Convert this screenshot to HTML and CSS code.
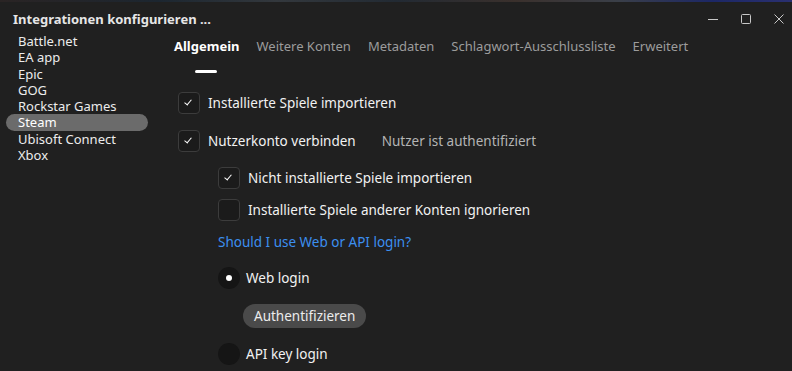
FILE: index.html
```html
<!DOCTYPE html>
<html lang="de">
  <head>
    <meta charset="UTF-8" />
    <title>Integrationen konfigurieren</title>
    <link rel="stylesheet" href="styles.css">
  </head>
  <body>
    <div class="desktop-strip"></div>
    <div class="window">
      <div class="titlebar">
        <span class="title">Integrationen konfigurieren ...</span>
        <div class="controls">
          <svg class="ctl" width="12" height="12" viewBox="0 0 12 12"><path d="M1 6.5h10" stroke="#c8c8c8" stroke-width="1"/></svg>
          <svg class="ctl" width="12" height="12" viewBox="0 0 12 12"><rect x="1.5" y="1.5" width="9" height="9" rx="1" fill="none" stroke="#c8c8c8" stroke-width="1"/></svg>
          <svg class="ctl" width="12" height="12" viewBox="0 0 12 12"><path d="M1.5 1.5l9 9M10.5 1.5l-9 9" stroke="#c8c8c8" stroke-width="1"/></svg>
        </div>
      </div>

      <div class="body">
        <ul class="sidebar">
          <li>Battle.net</li>
          <li>EA app</li>
          <li>Epic</li>
          <li>GOG</li>
          <li>Rockstar Games</li>
          <li class="active">Steam</li>
          <li>Ubisoft Connect</li>
          <li>Xbox</li>
        </ul>

        <div class="content">
          <div class="tabs">
            <span class="tab current">Allgemein</span>
            <span class="tab">Weitere Konten</span>
            <span class="tab">Metadaten</span>
            <span class="tab">Schlagwort-Ausschlussliste</span>
            <span class="tab">Erweitert</span>
          </div>

          <div class="options">
            <label class="check">
              <span class="box checked"></span>
              <span>Installierte Spiele importieren</span>
            </label>
            <label class="check">
              <span class="box checked"></span>
              <span>Nutzerkonto verbinden</span>
              <span class="status">Nutzer ist authentifiziert</span>
            </label>

            <div class="nested">
              <label class="check small">
                <span class="box checked"></span>
                <span>Nicht installierte Spiele importieren</span>
              </label>
              <label class="check small">
                <span class="box"></span>
                <span>Installierte Spiele anderer Konten ignorieren</span>
              </label>

              <a class="help">Should I use Web or API login?</a>

              <label class="radio">
                <span class="dot selected"></span>
                <span>Web login</span>
              </label>
              <button class="auth">Authentifizieren</button>
              <label class="radio">
                <span class="dot"></span>
                <span>API key login</span>
              </label>
            </div>
          </div>
        </div>
      </div>
    </div>
  </body>
</html>
```

FILE: styles.css
```css
html, body {
  margin: 0;
  height: 100%;
  overflow: hidden;
}

body {
  background: #202020;
  font-family: "Noto Sans", "Open Sans", sans-serif;
  font-size: 13.5px;
  color: #f2f2f2;
}

.desktop-strip {
  height: 2px;
  background: linear-gradient(90deg, #2a2424 0%, #1c2630 20%, #33383d 35%, #222a33 50%, #3a302c 65%, #3a3f48 78%, #1c2766 90%, #2a3070 100%);
}

.titlebar {
  display: flex;
  align-items: center;
  justify-content: space-between;
  height: 30px;
  padding: 2px 0 0 13px;
}
.title {
  font-weight: bold;
  font-size: 13px;
  color: #e6e6e6;
}
.controls {
  display: flex;
  gap: 21px;
  padding-right: 7px;
}

.body {
  display: flex;
}

.sidebar {
  list-style: none;
  margin: -1px 0 0;
  padding: 0 0 0 6px;
  width: 142px;
}
.sidebar li {
  height: 16.3px;
  line-height: 16px;
  padding-left: 12px;
  font-size: 13px;
  color: #ececec;
  border-radius: 9px;
}
.sidebar li.active {
  background: #6b6b6b;
  color: #fff;
}

.content {
  flex: 1;
  padding-left: 26px;
}

.tabs {
  display: flex;
  gap: 17px;
  padding-top: 3px;
}
.tab {
  color: #9c9c9c;
  font-size: 13px;
  position: relative;
  padding-bottom: 19px;
}
.tab.current {
  color: #fff;
  font-weight: bold;
}
.tab.current::after {
  content: "";
  position: absolute;
  left: 21px;
  width: 22px;
  bottom: 1px;
  height: 3px;
  border-radius: 2px;
  background: #fff;
}

.options {
  display: flex;
  flex-direction: column;
  padding-left: 4px;
  padding-top: 18px;
}
.check, .radio {
  display: flex;
  align-items: center;
  gap: 8px;
  height: 22px;
  margin-bottom: 16px;
}
.check.small {
  margin-bottom: 10px;
}
.box {
  width: 20px;
  height: 20px;
  border: 1px solid #3c3c3c;
  border-radius: 4px;
  background: #1b1b1b;
  position: relative;
}
.box.checked::after {
  content: "";
  position: absolute;
  left: 7px;
  top: 5px;
  width: 3px;
  height: 6px;
  border: solid #fff;
  border-width: 0 1.6px 1.6px 0;
  transform: rotate(40deg);
}
.status {
  margin-left: 18px;
  color: #b4b4b4;
}

.nested {
  display: flex;
  flex-direction: column;
  align-items: flex-start;
  padding-left: 40px;
  margin-top: -1px;
}
.help {
  color: #3c8ff0;
  margin: 2px 0 16px;
  cursor: pointer;
}
.radio {
  gap: 6px;
  margin-bottom: 0;
}
.dot {
  width: 22px;
  height: 22px;
  border-radius: 50%;
  background: #151515;
  position: relative;
}
.dot.selected::after {
  content: "";
  position: absolute;
  left: 8px;
  top: 8px;
  width: 6px;
  height: 6px;
  border-radius: 50%;
  background: #fff;
}

.auth {
  margin: 15px 0 15px 25px;
  height: 24px;
  padding: 0 11px;
  border: none;
  border-radius: 12px;
  background: #4a4a4a;
  color: #ececec;
  font-family: inherit;
  font-size: 13.5px;
}
```
